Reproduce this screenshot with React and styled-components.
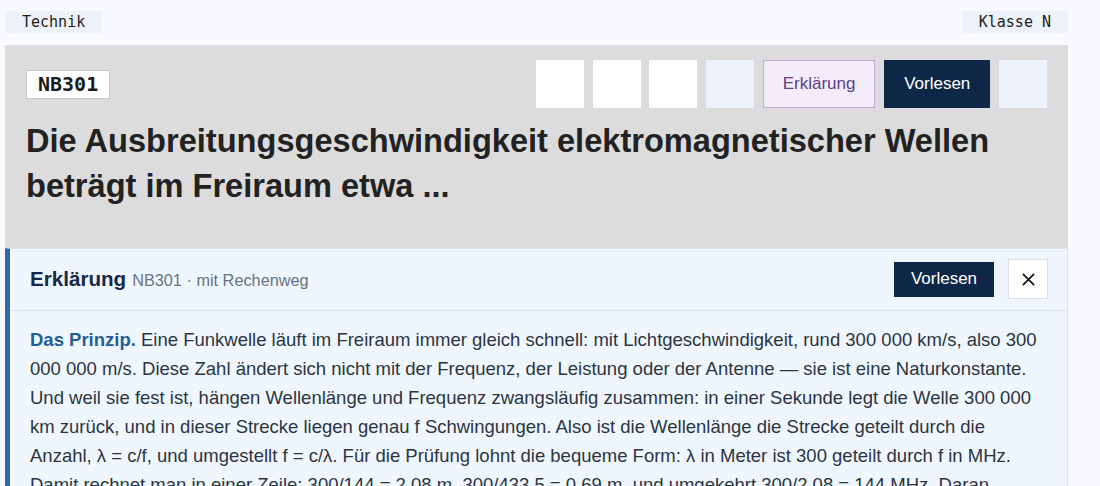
import React from "react";
import styled, { createGlobalStyle } from "styled-components";

const GlobalStyle = createGlobalStyle`
  * { box-sizing: border-box; }
  body {
    margin: 0;
    background: #f8fafd;
    font-family: "Liberation Sans", Arial, sans-serif;
    color: #222;
  }
`;

const Page = styled.div`
  width: 1063px;
  margin-left: 5px;
  padding-top: 11px;
`;

const TagRow = styled.div`
  display: flex;
  justify-content: space-between;
  margin-bottom: 12px;
`;

const Tag = styled.span`
  font-family: "DejaVu Sans Mono", monospace;
  font-size: 15px;
  line-height: 18px;
  padding: 2px 17px;
  background: #edf1f8;
  color: #222;
`;

const QuestionCard = styled.section`
  background: #dcdcdc;
  padding: 15px 21px 40px 21px;
`;

const CardHead = styled.div`
  display: flex;
  align-items: center;
  justify-content: space-between;
`;

const Badge = styled.span`
  font-family: "DejaVu Sans Mono", monospace;
  font-weight: 700;
  font-size: 20px;
  line-height: 25px;
  padding: 1px 11px;
  background: #fff;
  border: 1px solid #c9c9c9;
  color: #1b1b1b;
`;

const Toolbar = styled.div`
  display: flex;
  gap: 8.7px;
`;

const ToolButton = styled.button`
  height: 48px;
  min-width: 48px;
  padding: 0 ${(p) => (p.$label ? "19px" : "0")};
  border: 1px solid ${(p) => p.$border || "transparent"};
  background: ${(p) => p.$bg};
  color: ${(p) => p.$color || "#222"};
  font-family: "Liberation Sans", Arial, sans-serif;
  font-size: 17px;
  cursor: pointer;
`;

const Title = styled.h1`
  margin: 10px 0 0;
  font-size: 32.6px;
  line-height: 45px;
  font-weight: 700;
  color: #222;
`;

const Explain = styled.section`
  background: #f0f6fd;
  border: 1px solid #d8e5f2;
  border-left: 5px solid #2c6ca3;
`;

const ExplainHead = styled.div`
  display: flex;
  align-items: center;
  justify-content: space-between;
  padding: 10px 19px 11px 20px;
  border-bottom: 1px solid #d4e2f1;
`;

const HeadTitle = styled.div`
  display: flex;
  align-items: baseline;
  gap: 6px;
`;

const HeadStrong = styled.span`
  font-size: 20.6px;
  font-weight: 700;
  color: #14294a;
`;

const HeadMeta = styled.span`
  font-size: 16.3px;
  color: #687383;
`;

const HeadActions = styled.div`
  display: flex;
  align-items: center;
  gap: 14px;
`;

const SmallRead = styled.button`
  height: 35px;
  width: 100px;
  border: none;
  background: #0f2747;
  color: #fff;
  font-family: "Liberation Sans", Arial, sans-serif;
  font-size: 17px;
  cursor: pointer;
`;

const CloseButton = styled.button`
  width: 40px;
  height: 40px;
  border: 1px solid #d8e2ee;
  background: #fff;
  color: #1a1a1a;
  display: flex;
  align-items: center;
  justify-content: center;
  padding: 0;
  cursor: pointer;
`;

const Body = styled.div`
  padding: 14px 20px 20px 20px;
  font-size: 18.5px;
  line-height: 29px;
  color: #2b3542;
`;

const Lead = styled.strong`
  color: #1f5e98;
`;

export default function App() {
  return (
    <>
      <GlobalStyle />
      <Page>
        <TagRow>
          <Tag>Technik</Tag>
          <Tag>Klasse N</Tag>
        </TagRow>
        <QuestionCard>
          <CardHead>
            <Badge>NB301</Badge>
            <Toolbar>
              <ToolButton $bg="#fff" aria-label="Merken" />
              <ToolButton $bg="#fff" aria-label="Teilen" />
              <ToolButton $bg="#fff" aria-label="Notiz" />
              <ToolButton $bg="#eef2fa" aria-label="Hinweis" />
              <ToolButton $label $bg="#f3ecfb" $border="#bda9d8" $color="#5b3f8c">
                Erklärung
              </ToolButton>
              <ToolButton $label $bg="#0f2747" $border="#0f2747" $color="#fff">
                Vorlesen
              </ToolButton>
              <ToolButton $bg="#eef2fa" aria-label="Mehr" />
            </Toolbar>
          </CardHead>
          <Title>
            Die Ausbreitungsgeschwindigkeit elektromagnetischer Wellen beträgt im
            Freiraum etwa ...
          </Title>
        </QuestionCard>
        <Explain>
          <ExplainHead>
            <HeadTitle>
              <HeadStrong>Erklärung</HeadStrong>
              <HeadMeta>NB301 · mit Rechenweg</HeadMeta>
            </HeadTitle>
            <HeadActions>
              <SmallRead>Vorlesen</SmallRead>
              <CloseButton aria-label="Schließen">
                <svg width="13" height="13" viewBox="0 0 14 14">
                  <path
                    d="M1.5 1.5 L12.5 12.5 M12.5 1.5 L1.5 12.5"
                    stroke="#1a1a1a"
                    strokeWidth="2"
                    strokeLinecap="round"
                  />
                </svg>
              </CloseButton>
            </HeadActions>
          </ExplainHead>
          <Body>
            <Lead>Das Prinzip.</Lead> Eine Funkwelle läuft im Freiraum immer gleich
            schnell: mit Lichtgeschwindigkeit, rund 300 000 km/s, also 300 000 000
            m/s. Diese Zahl ändert sich nicht mit der Frequenz, der Leistung oder der
            Antenne — sie ist eine Naturkonstante. Und weil sie fest ist, hängen
            Wellenlänge und Frequenz zwangsläufig zusammen: in einer Sekunde legt die
            Welle 300 000 km zurück, und in dieser Strecke liegen genau f
            Schwingungen. Also ist die Wellenlänge die Strecke geteilt durch die
            Anzahl, λ = c/f, und umgestellt f = c/λ. Für die Prüfung lohnt die bequeme
            Form: λ in Meter ist 300 geteilt durch f in MHz. Damit rechnet man in einer
            Zeile: 300/144 = 2,08 m, 300/433,5 = 0,69 m, und umgekehrt 300/2,08 = 144
            MHz. Daran erkennt man auch, warum das 2-m-Band und das 70-cm-Band so
            heißen.
          </Body>
        </Explain>
      </Page>
    </>
  );
}
